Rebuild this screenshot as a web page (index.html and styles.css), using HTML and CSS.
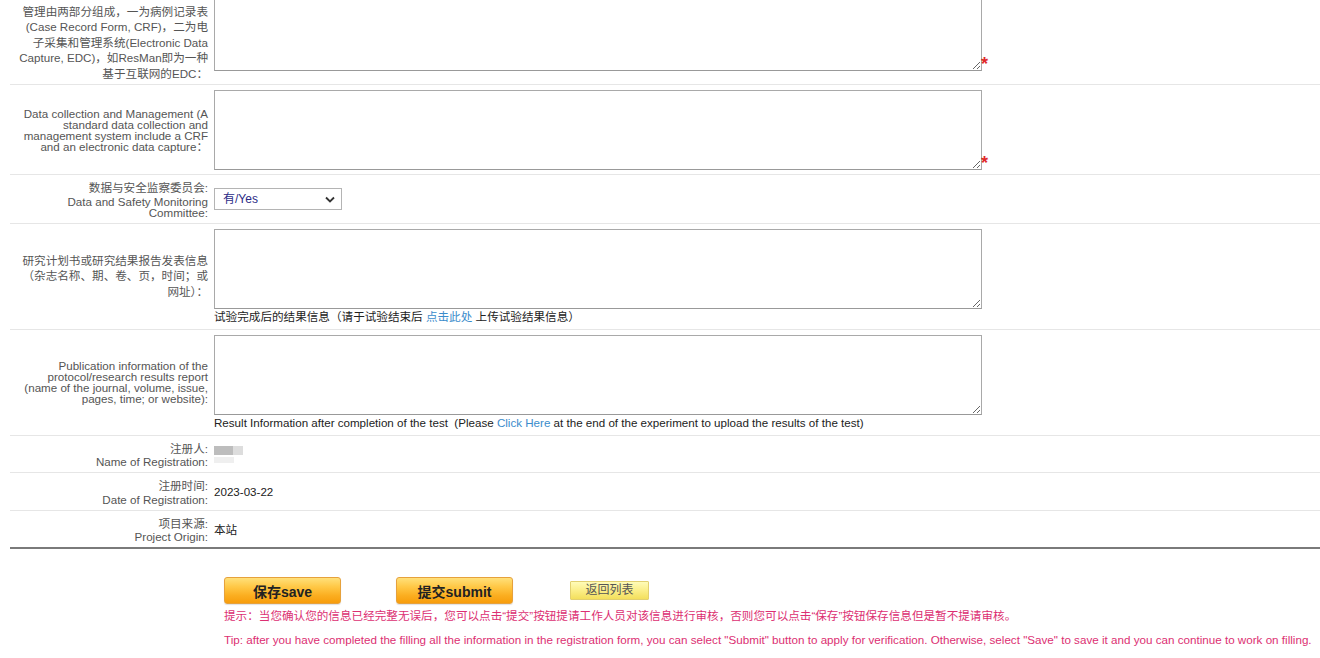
FILE: index.html
```html
<!DOCTYPE html>
<html lang="zh-CN">
<head>
<meta charset="utf-8">
<title>注册表单</title>
<link rel="stylesheet" href="styles.css">
</head>
<body>
<div class="form">
  <div class="row first">
    <div class="lbl">
      <div class="l-zh">管理由两部分组成，一为病例记录表</div>
      <div class="l-zh">(Case Record Form, CRF)，二为电</div>
      <div class="l-zh">子采集和管理系统(Electronic Data</div>
      <div class="l-zh">Capture, EDC)，如ResMan即为一种</div>
      <div class="l-zh">基于互联网的EDC：</div>
    </div>
    <div class="val">
      <div class="field"><textarea class="ta"></textarea><span class="star">*</span></div>
    </div>
  </div>

  <div class="row">
    <div class="lbl">
      <div class="l-en">Data collection and Management (A</div>
      <div class="l-en">standard data collection and</div>
      <div class="l-en">management system include a CRF</div>
      <div class="l-en">and an electronic data capture：</div>
    </div>
    <div class="val">
      <div class="field"><textarea class="ta"></textarea><span class="star">*</span></div>
    </div>
  </div>

  <div class="row">
    <div class="lbl">
      <div class="l-zh">数据与安全监察委员会:</div>
      <div class="l-en">Data and Safety Monitoring</div>
      <div class="l-en">Committee:</div>
    </div>
    <div class="val">
      <div class="sel-wrap">
        <select class="sel"><option>有/Yes</option><option>无/No</option></select>
        <svg class="chev" width="10" height="7" viewBox="0 0 10 7"><polyline points="1,1.5 5,5.5 9,1.5" fill="none" stroke="#333" stroke-width="1.8"/></svg>
      </div>
    </div>
  </div>

  <div class="row">
    <div class="lbl">
      <div class="l-zh">研究计划书或研究结果报告发表信息</div>
      <div class="l-zh">（杂志名称、期、卷、页，时间；或</div>
      <div class="l-zh">网址）：</div>
    </div>
    <div class="val with-note">
      <textarea class="ta"></textarea>
      <div class="note">试验完成后的结果信息（请于试验结束后 <a class="lnk" href="#">点击此处</a> 上传试验结果信息）</div>
    </div>
  </div>

  <div class="row">
    <div class="lbl">
      <div class="l-en">Publication information of the</div>
      <div class="l-en">protocol/research results report</div>
      <div class="l-en">(name of the journal, volume, issue,</div>
      <div class="l-en">pages, time; or website):</div>
    </div>
    <div class="val with-note">
      <textarea class="ta"></textarea>
      <div class="note">Result Information after completion of the test &nbsp;(Please <a class="lnk" href="#">Click Here</a> at the end of the experiment to upload the results of the test)</div>
    </div>
  </div>

  <div class="row">
    <div class="lbl">
      <div class="l-zh">注册人:</div>
      <div class="l-en">Name of Registration:</div>
    </div>
    <div class="val">
      <div class="redact"><span class="r1"></span><span class="r2"></span></div>
    </div>
  </div>

  <div class="row">
    <div class="lbl">
      <div class="l-zh">注册时间:</div>
      <div class="l-en">Date of Registration:</div>
    </div>
    <div class="val"><span class="txt">2023-03-22</span></div>
  </div>

  <div class="row last">
    <div class="lbl">
      <div class="l-zh">项目来源:</div>
      <div class="l-en">Project Origin:</div>
    </div>
    <div class="val"><span class="txt">本站</span></div>
  </div>
</div>

<div class="actions">
  <div class="btns">
    <button class="btn big">保存save</button>
    <button class="btn big">提交submit</button>
    <button class="btn small">返回列表</button>
  </div>
  <p class="tip">提示：当您确认您的信息已经完整无误后，您可以点击“提交”按钮提请工作人员对该信息进行审核，否则您可以点击“保存”按钮保存信息但是暂不提请审核。</p>
  <p class="tip tip2">Tip: after you have completed the filling all the information in the registration form, you can select "Submit" button to apply for verification. Otherwise, select "Save" to save it and you can continue to work on filling.</p>
</div>
</body>
</html>
```

FILE: styles.css
```css
* { box-sizing: border-box; }

html, body {
  margin: 0;
  background: #fff;
  overflow: hidden;
}

body {
  font-family: "Liberation Sans", Arial, "Noto Sans CJK SC", sans-serif;
  font-size: 11.6px;
  color: #333;
}

.form {
  margin: -14px 0 0 10px;
  width: 1310px;
}

.row {
  display: grid;
  grid-template-columns: 200px 1fr;
  border-bottom: 1px solid #e6e6e6;
}

.row.last {
  border-bottom: 2px solid #7a7a7a;
}

.lbl {
  align-self: center;
  text-align: right;
  padding: 5px 2px 5px 0;
  color: #555;
  white-space: nowrap;
}

.row.first .lbl {
  align-self: end;
  padding-bottom: 3px;
}

.row.first .val {
  padding-bottom: 13px;
}

.l-en { line-height: 11px; }
.l-zh { line-height: 15.5px; }

.val {
  align-self: center;
  padding: 5px 0 4px 4px;
}

.val.with-note { padding-bottom: 5px; }

.field {
  display: flex;
  align-items: flex-end;
}

.ta {
  display: block;
  width: 768px;
  height: 80px;
  margin: 0;
  border: 1px solid #a9a9a9;
  border-bottom-color: #999;
  background: #fff;
  font-family: "Liberation Sans", "Noto Sans CJK SC", sans-serif;
  font-size: 12px;
}

.star {
  color: #e02a2a;
  font-family: "Liberation Sans", sans-serif;
  font-weight: bold;
  font-size: 18px;
  line-height: 14px;
  margin-left: -1px;
}

.note {
  line-height: 15px;
  color: #222;
  white-space: nowrap;
}

.lnk {
  color: #3a8ccb;
  text-decoration: none;
}

.sel-wrap {
  position: relative;
  display: inline-block;
  vertical-align: top;
}

.sel {
  appearance: none;
  -webkit-appearance: none;
  display: block;
  width: 128px;
  height: 22px;
  margin: 0;
  padding: 0 0 0 8px;
  border: 1px solid #b4b4b4;
  border-radius: 0;
  background: #fff;
  color: #2b2b86;
  font-family: "Liberation Sans", "Noto Sans CJK SC", sans-serif;
  font-size: 12px;
}

.chev {
  position: absolute;
  right: 7px;
  top: 8px;
  pointer-events: none;
}

.redact {
  display: flex;
  flex-direction: column;
  gap: 2px;
  filter: blur(0.7px);
}

.r1 {
  width: 29px;
  height: 9px;
  background: linear-gradient(90deg, #bdbdbd 0 65%, #dddddd 65% 100%);
}

.r2 {
  width: 20px;
  height: 6px;
  background: #efefef;
}

.txt {
  line-height: 15px;
  color: #222;
  font-size: 11.6px;
}

.actions {
  margin-left: 224px;
  padding-top: 28px;
}

.btns {
  display: flex;
  align-items: center;
}

.btn {
  margin: 0;
  font-family: "Liberation Sans", "Noto Sans CJK SC", sans-serif;
  cursor: pointer;
}

.btn.big {
  width: 117px;
  height: 27px;
  margin-right: 55px;
  padding: 0;
  border: 1px solid #e6a13c;
  border-radius: 3px;
  background: linear-gradient(#ffe07a 0%, #ffc846 35%, #fbae20 70%, #f79d0c 100%);
  color: #222;
  font-size: 14px;
  font-weight: bold;
  box-shadow: 0 1px 1px rgba(0, 0, 0, 0.12);
}

.btn.small {
  width: 79px;
  height: 19px;
  margin-left: 2px;
  padding: 0;
  border: 1px solid #e2d070;
  border-radius: 1px;
  background: linear-gradient(#fffbb8 0%, #fbee88 50%, #f3df5c 100%);
  color: #555;
  font-size: 12px;
  line-height: 17px;
}

.tip {
  margin: 4px 0 0;
  line-height: 16px;
  color: #dc2f72;
  font-size: 11.6px;
  white-space: nowrap;
}

.tip2 {
  margin-top: 8px;
  font-size: 11.65px;
}
```
